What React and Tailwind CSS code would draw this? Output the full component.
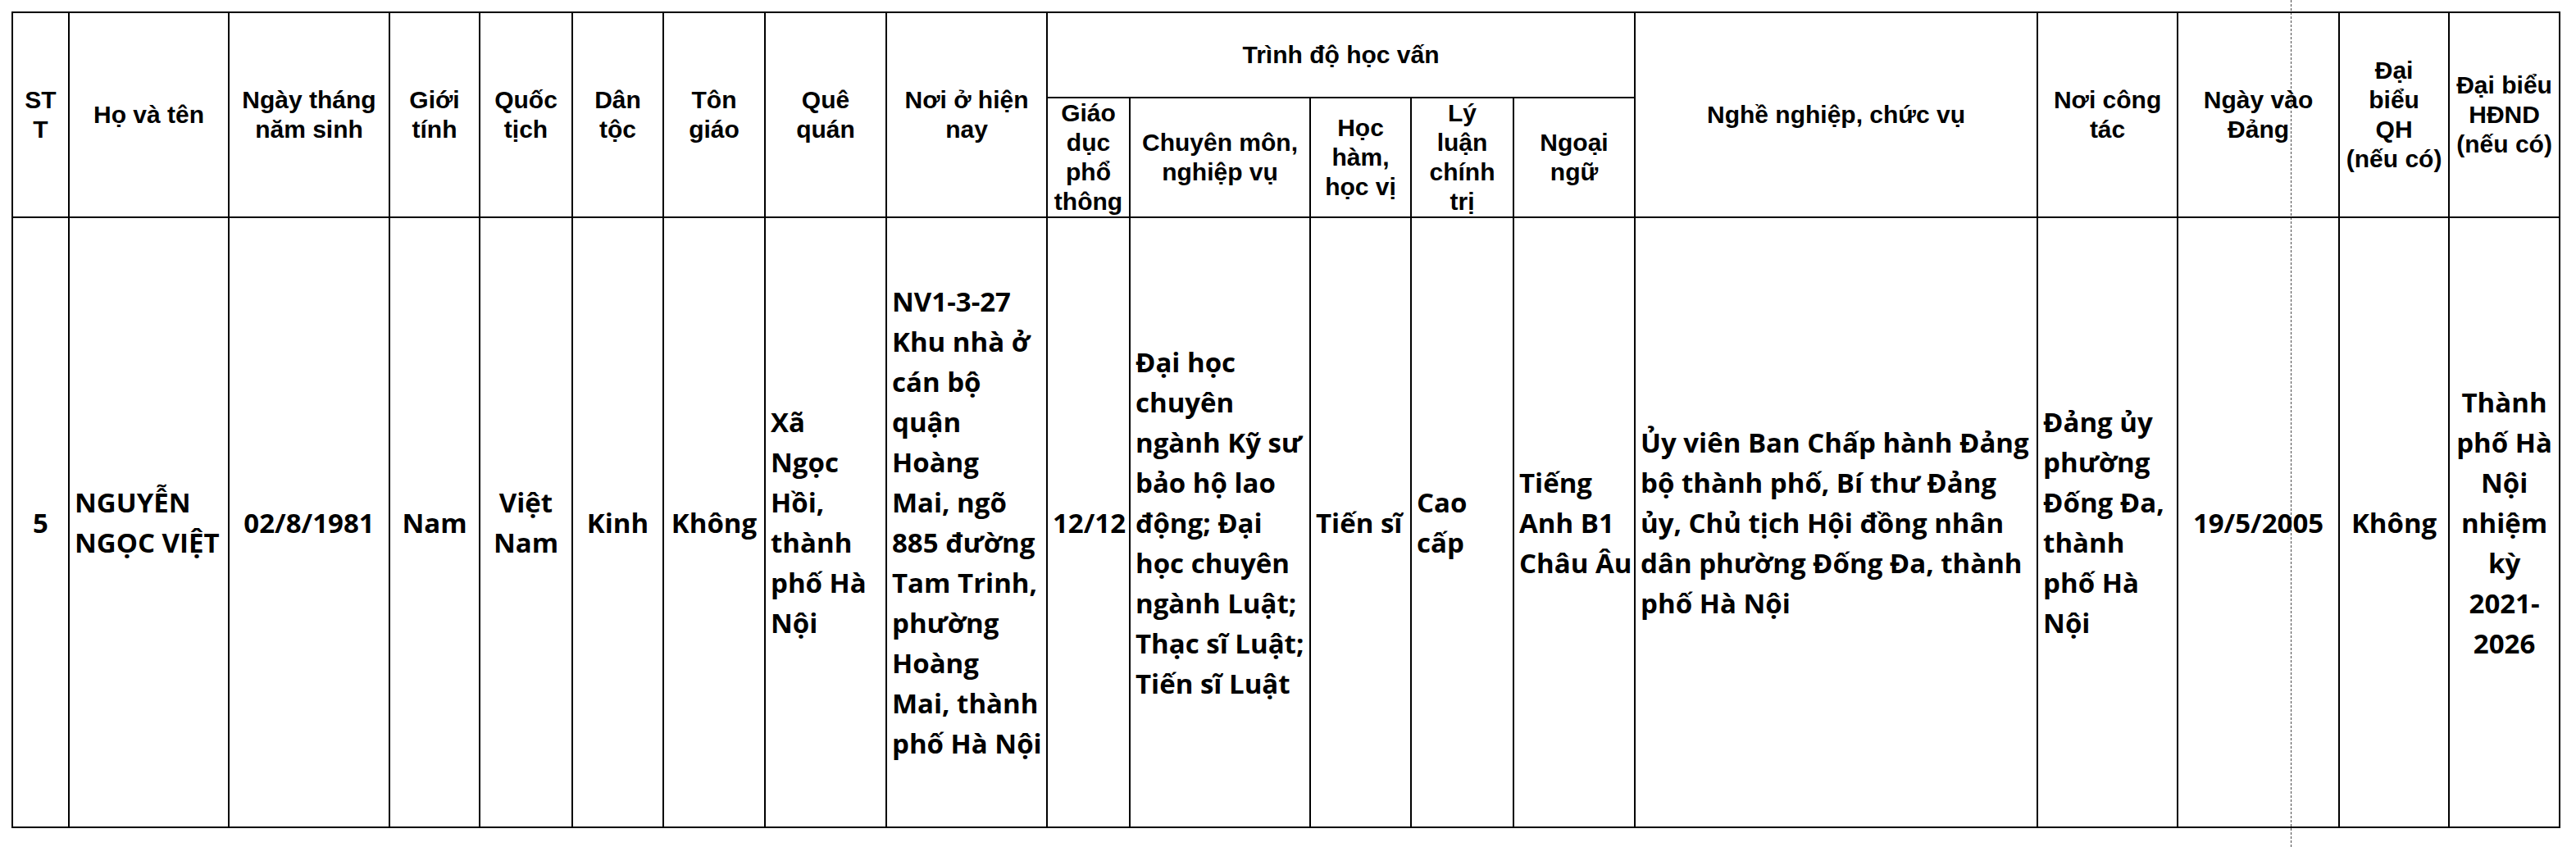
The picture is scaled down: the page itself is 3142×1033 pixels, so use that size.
const cols = [69, 195, 196, 110, 113, 111, 124, 148, 196, 101, 220, 123, 125, 148, 491, 171, 197, 134, 135];

const colClass = {
  69: "w-[69px]",
  195: "w-[195px]",
  196: "w-[196px]",
  110: "w-[110px]",
  113: "w-[113px]",
  111: "w-[111px]",
  124: "w-[124px]",
  148: "w-[148px]",
  101: "w-[101px]",
  220: "w-[220px]",
  123: "w-[123px]",
  125: "w-[125px]",
  491: "w-[491px]",
  171: "w-[171px]",
  197: "w-[197px]",
  134: "w-[134px]",
  135: "w-[135px]",
};

// header cell text is broken exactly as in the printed form
const Lines = ({ items }) =>
  items.map((line, i) => (
    <span key={i} className="block">
      {line}
    </span>
  ));

const Th = ({ lines, rowSpan, colSpan }) => (
  <th
    rowSpan={rowSpan}
    colSpan={colSpan}
    className="border-2 border-black p-0 text-center align-middle whitespace-nowrap font-bold text-[30px] leading-[36px] font-['Liberation_Sans',Arial,sans-serif]"
  >
    <Lines items={lines} />
  </th>
);

const Td = ({ lines, center }) => (
  <td
    className={`border-2 border-black px-[6px] align-middle whitespace-nowrap font-bold text-[33px] leading-[49px] font-['Open_Sans','Noto_Sans',sans-serif] ${
      center ? "text-center" : "text-left"
    }`}
  >
    <Lines items={lines} />
  </td>
);

export default function App() {
  return (
    <div className="relative w-[3142px] h-[1033px] bg-white text-black overflow-hidden">
      <div className="pl-[14px] pt-[14px]">
        <table className="table-fixed border-collapse w-[3107px]">
          <colgroup>
            {cols.map((w, i) => (
              <col key={i} className={colClass[w]} />
            ))}
          </colgroup>
          <thead>
            <tr className="h-[104px]">
              <Th rowSpan={2} lines={["ST", "T"]} />
              <Th rowSpan={2} lines={["Họ và tên"]} />
              <Th rowSpan={2} lines={["Ngày tháng", "năm sinh"]} />
              <Th rowSpan={2} lines={["Giới", "tính"]} />
              <Th rowSpan={2} lines={["Quốc", "tịch"]} />
              <Th rowSpan={2} lines={["Dân", "tộc"]} />
              <Th rowSpan={2} lines={["Tôn", "giáo"]} />
              <Th rowSpan={2} lines={["Quê", "quán"]} />
              <Th rowSpan={2} lines={["Nơi ở hiện", "nay"]} />
              <Th colSpan={5} lines={["Trình độ học vấn"]} />
              <Th rowSpan={2} lines={["Nghề nghiệp, chức vụ"]} />
              <Th rowSpan={2} lines={["Nơi công", "tác"]} />
              <Th rowSpan={2} lines={["Ngày vào", "Đảng"]} />
              <Th rowSpan={2} lines={["Đại", "biểu", "QH", "(nếu có)"]} />
              <Th rowSpan={2} lines={["Đại biểu", "HĐND", "(nếu có)"]} />
            </tr>
            <tr className="h-[145px]">
              <Th lines={["Giáo", "dục", "phổ", "thông"]} />
              <Th lines={["Chuyên môn,", "nghiệp vụ"]} />
              <Th lines={["Học", "hàm,", "học vị"]} />
              <Th lines={["Lý", "luận", "chính", "trị"]} />
              <Th lines={["Ngoại", "ngữ"]} />
            </tr>
          </thead>
          <tbody>
            <tr className="h-[744px]">
              <Td center lines={["5"]} />
              <Td lines={["NGUYỄN", "NGỌC VIỆT"]} />
              <Td center lines={["02/8/1981"]} />
              <Td center lines={["Nam"]} />
              <Td center lines={["Việt", "Nam"]} />
              <Td center lines={["Kinh"]} />
              <Td center lines={["Không"]} />
              <Td lines={["Xã", "Ngọc", "Hồi,", "thành", "phố Hà", "Nội"]} />
              <Td
                lines={[
                  "NV1-3-27",
                  "Khu nhà ở",
                  "cán bộ",
                  "quận",
                  "Hoàng",
                  "Mai, ngõ",
                  "885 đường",
                  "Tam Trinh,",
                  "phường",
                  "Hoàng",
                  "Mai, thành",
                  "phố Hà Nội",
                ]}
              />
              <Td center lines={["12/12"]} />
              <Td
                lines={[
                  "Đại học",
                  "chuyên",
                  "ngành Kỹ sư",
                  "bảo hộ lao",
                  "động; Đại",
                  "học chuyên",
                  "ngành Luật;",
                  "Thạc sĩ Luật;",
                  "Tiến sĩ Luật",
                ]}
              />
              <Td lines={["Tiến sĩ"]} />
              <Td lines={["Cao", "cấp"]} />
              <Td lines={["Tiếng", "Anh B1", "Châu Âu"]} />
              <Td
                lines={[
                  "Ủy viên Ban Chấp hành Đảng",
                  "bộ thành phố, Bí thư Đảng",
                  "ủy, Chủ tịch Hội đồng nhân",
                  "dân phường Đống Đa, thành",
                  "phố Hà Nội",
                ]}
              />
              <Td lines={["Đảng ủy", "phường", "Đống Đa,", "thành", "phố Hà", "Nội"]} />
              <Td center lines={["19/5/2005"]} />
              <Td center lines={["Không"]} />
              <Td center lines={["Thành", "phố Hà", "Nội", "nhiệm", "kỳ", "2021-", "2026"]} />
            </tr>
          </tbody>
        </table>
      </div>

      {/* scan fold line running down the page */}
      <div className="absolute left-[2794px] top-0 h-full border-l border-dashed border-black/70" />
    </div>
  );
}
